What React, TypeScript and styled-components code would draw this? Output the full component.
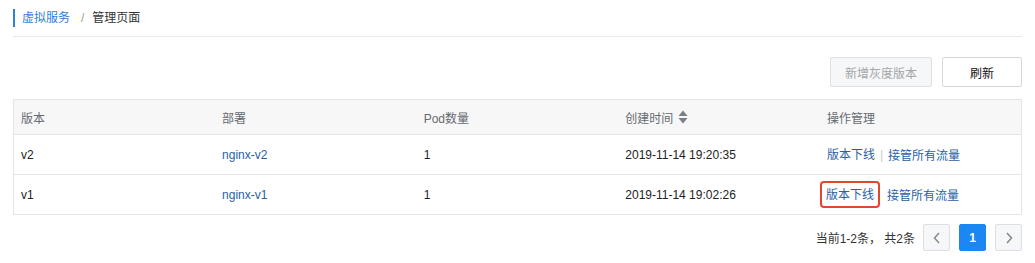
import styled, { createGlobalStyle } from 'styled-components';

const GlobalStyle = createGlobalStyle`
  body {
    margin: 0;
    background: #ffffff;
    font-family: "Liberation Sans", "Noto Sans CJK SC", sans-serif;
    font-size: 12px;
    color: #333333;
  }
`;

const colunas = ['版本', '部署', 'Pod数量', '创建时间', '操作管理'];

const linhas = [
  { versao: 'v2', deploy: 'nginx-v2', pods: '1', criado: '2019-11-14 19:20:35', destacado: false },
  { versao: 'v1', deploy: 'nginx-v1', pods: '1', criado: '2019-11-14 19:02:26', destacado: true },
];

function IconeOrdenar() {
  return (
    <svg width="10" height="14" viewBox="0 0 10 14" aria-hidden="true">
      <path d="M5 0.5 L9.5 6 L0.5 6 Z" fill="#7a7f87" />
      <path d="M5 13.5 L9.5 8 L0.5 8 Z" fill="#7a7f87" />
    </svg>
  );
}

function Seta({ direcao }: { direcao: 'esq' | 'dir' }) {
  return (
    <svg width="8" height="12" viewBox="0 0 8 12" aria-hidden="true">
      <path
        d={direcao === 'esq' ? 'M6 1 L1.5 6 L6 11' : 'M2 1 L6.5 6 L2 11'}
        fill="none"
        stroke="#888"
        strokeWidth="1.5"
      />
    </svg>
  );
}

export default function App() {
  return (
    <Pagina>
      <GlobalStyle />
      <Breadcrumb>
        <LinkBreadcrumb>虚拟服务</LinkBreadcrumb>
        <Separador>/</Separador>
        <Atual>管理页面</Atual>
      </Breadcrumb>
      <Divisor />
      <BarraAcoes>
        <Botao disabled $largura={102}>新增灰度版本</Botao>
        <Botao $largura={80}>刷新</Botao>
      </BarraAcoes>
      <Tabela>
        <thead>
          <tr>
            {colunas.map((coluna) => (
              <Th key={coluna}>
                {coluna === '创建时间' ? (
                  <ComIcone>
                    {coluna}
                    <IconeOrdenar />
                  </ComIcone>
                ) : (
                  coluna
                )}
              </Th>
            ))}
          </tr>
        </thead>
        <tbody>
          {linhas.map((linha) => (
            <tr key={linha.versao}>
              <Td>{linha.versao}</Td>
              <Td>
                <LinkTabela>{linha.deploy}</LinkTabela>
              </Td>
              <Td>{linha.pods}</Td>
              <Td>{linha.criado}</Td>
              <Td>
                <Operacoes>
                  <Acao $destacado={linha.destacado}>版本下线</Acao>
                  <BarraVertical $oculta={linha.destacado}>|</BarraVertical>
                  <LinkTabela>接管所有流量</LinkTabela>
                </Operacoes>
              </Td>
            </tr>
          ))}
        </tbody>
      </Tabela>
      <Paginacao>
        <Resumo>当前1-2条， 共2条</Resumo>
        <BotaoPagina>
          <Seta direcao="esq" />
        </BotaoPagina>
        <BotaoPagina $ativo>1</BotaoPagina>
        <BotaoPagina>
          <Seta direcao="dir" />
        </BotaoPagina>
      </Paginacao>
    </Pagina>
  );
}

const Pagina = styled.div`
  padding: 9px 13px 0 13px;
`;

const Breadcrumb = styled.div`
  display: flex;
  align-items: center;
  height: 18px;
  border-left: 2px solid #2f80d8;
  padding-left: 7px;
  line-height: 18px;
`;

const LinkBreadcrumb = styled.span`
  color: #2f7fd6;
`;

const Separador = styled.span`
  color: #999999;
  margin: 0 8px 0 11px;
`;

const Atual = styled.span`
  color: #333333;
`;

const Divisor = styled.div`
  margin-top: 9px;
  border-top: 1px solid #e9e9e9;
`;

const BarraAcoes = styled.div`
  margin-top: 20px;
  display: flex;
  justify-content: flex-end;
  gap: 10px;
`;

const Botao = styled.button<{ $largura: number }>`
  width: ${({ $largura }) => $largura}px;
  height: 30px;
  border: 1px solid ${({ disabled }) => (disabled ? '#dcdfe3' : '#d4d8dd')};
  border-radius: 2px;
  background: ${({ disabled }) => (disabled ? '#f6f7f8' : '#ffffff')};
  color: ${({ disabled }) => (disabled ? '#a3a6aa' : '#111111')};
  font-family: inherit;
  font-size: 12px;
  padding: 0;
  cursor: ${({ disabled }) => (disabled ? 'not-allowed' : 'pointer')};
`;

const Tabela = styled.table`
  margin-top: 12px;
  width: 100%;
  border-collapse: collapse;
  table-layout: fixed;
  border: 1px solid #e3e5e8;
`;

const Th = styled.th`
  height: 34px;
  padding: 0 0 0 7px;
  text-align: left;
  font-weight: normal;
  color: #666a70;
  background: #f7f7f8;
  border-bottom: 1px solid #e3e5e8;
`;

const ComIcone = styled.span`
  display: inline-flex;
  align-items: center;
  gap: 5px;
`;

const Td = styled.td`
  height: 39px;
  padding: 0 0 0 7px;
  color: #222222;
  border-bottom: 1px solid #e3e5e8;
`;

const LinkTabela = styled.span`
  color: #2a5ea6;
  cursor: pointer;
`;

const Operacoes = styled.div`
  display: flex;
  align-items: center;
`;

const Acao = styled.span<{ $destacado: boolean }>`
  color: #2a5ea6;
  cursor: pointer;
  margin-left: ${({ $destacado }) => ($destacado ? '-7px' : '0')};
  padding: ${({ $destacado }) => ($destacado ? '4px 4px 3px 4px' : '0')};
  border: ${({ $destacado }) => ($destacado ? '2px solid #e1472f' : 'none')};
  border-radius: 4px;
  line-height: 16px;
`;

const BarraVertical = styled.span<{ $oculta: boolean }>`
  color: ${({ $oculta }) => ($oculta ? 'transparent' : '#c8cbd0')};
  margin: ${({ $oculta }) => ($oculta ? '0 1px 0 0' : '0 5px')};
  width: ${({ $oculta }) => ($oculta ? '6px' : 'auto')};
  overflow: hidden;
`;

const Paginacao = styled.div`
  margin-top: 9px;
  display: flex;
  justify-content: flex-end;
  align-items: center;
  gap: 9px;
`;

const Resumo = styled.span`
  color: #333333;
  margin-right: -1px;
`;

const BotaoPagina = styled.div<{ $ativo?: boolean }>`
  width: 27px;
  height: 27px;
  box-sizing: border-box;
  display: flex;
  align-items: center;
  justify-content: center;
  border-radius: 2px;
  border: 1px solid ${({ $ativo }) => ($ativo ? '#1a87f2' : '#dcdfe3')};
  background: ${({ $ativo }) => ($ativo ? '#1a87f2' : '#f6f7f8')};
  color: ${({ $ativo }) => ($ativo ? '#ffffff' : '#888888')};
  font-weight: bold;
  cursor: pointer;
`;
